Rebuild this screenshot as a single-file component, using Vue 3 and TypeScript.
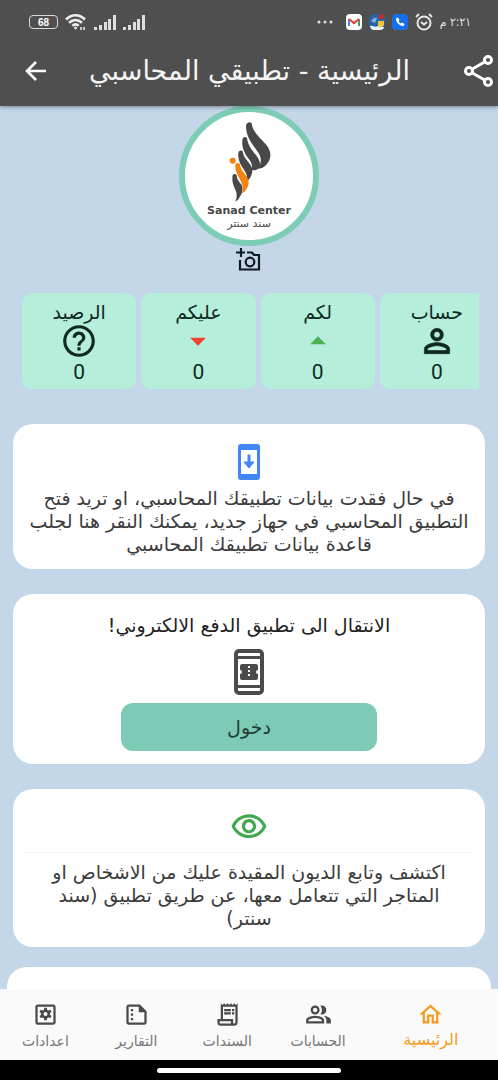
<script setup lang="ts">
interface Stat { label: string; value: number; icon: 'help' | 'down' | 'up' | 'person' }
interface Tab { label: string; icon: string[]; active?: boolean }

const stats: Stat[] = [
  { label: 'الرصيد', value: 0, icon: 'help' },
  { label: 'عليكم', value: 0, icon: 'down' },
  { label: 'لكم', value: 0, icon: 'up' },
  { label: 'حساب', value: 0, icon: 'person' },
]

const restoreLines: string[] = [
  'في حال فقدت بيانات تطبيقك المحاسبي، او تريد فتح',
  'التطبيق المحاسبي في جهاز جديد، يمكنك النقر هنا لجلب',
  'قاعدة بيانات تطبيقك المحاسبي',
]

const debtLines: string[] = [
  'اكتشف وتابع الديون المقيدة عليك من الاشخاص او',
  'المتاجر التي تتعامل معها، عن طريق تطبيق (سند',
  'سنتر)',
]

const tabs: Tab[] = [
  {
    label: 'الرئيسية',
    active: true,
    icon: ['M12 5.69l5 4.5V18h-2v-6H9v6H7v-7.81l5-4.5M12 3L2 12h3v8h6v-6h2v6h6v-8h3L12 3z'],
  },
  {
    label: 'الحسابات',
    icon: [
      'M16.67 13.13C18.04 14.06 19 15.32 19 17v3h4v-3c0-2.18-3.57-3.47-6.33-3.87z',
      'M15 12c2.21 0 4-1.79 4-4s-1.79-4-4-4c-.47 0-.91.1-1.33.24C14.5 5.27 15 6.58 15 8s-.5 2.73-1.33 3.76c.42.14.86.24 1.33.24z',
      'M9 12c2.21 0 4-1.79 4-4s-1.79-4-4-4-4 1.79-4 4 1.79 4 4 4zm0-6c1.1 0 2 .9 2 2s-.9 2-2 2-2-.9-2-2 .9-2 2-2z',
      'M9 13c-2.67 0-8 1.34-8 4v3h16v-3c0-2.66-5.33-4-8-4zm6 5H3v-.99C3.2 16.29 6.3 15 9 15s5.8 1.29 6 2v1z',
    ],
  },
  {
    label: 'السندات',
    icon: [
      'M19.5 3.5L18 2l-1.5 1.5L15 2l-1.5 1.5L12 2l-1.5 1.5L9 2 7.5 3.5 6 2v14H3v3c0 1.66 1.34 3 3 3h12c1.66 0 3-1.34 3-3V2l-1.5 1.5zM15 20H6c-.55 0-1-.45-1-1v-1h10v2zm4-1c0 .55-.45 1-1 1s-1-.45-1-1v-3H8V5h11v14z',
      'M9 7h6v2H9zM16 7h2v2h-2zM9 10h6v2H9zM16 10h2v2h-2z',
    ],
  },
  {
    label: 'التقارير',
    icon: [
      'M15 3H5c-1.1 0-2 .9-2 2v14c0 1.1.9 2 2 2h14c1.1 0 2-.9 2-2V9l-6-6zM5 19V5h9v5h5v9H5z',
      'M7 7h2v2H7zM7 11h2v2H7zM7 15h2v2H7z',
    ],
  },
  {
    label: 'اعدادات',
    icon: [
      'M19 3H5c-1.1 0-2 .9-2 2v14c0 1.1.9 2 2 2h14c1.1 0 2-.9 2-2V5c0-1.1-.9-2-2-2zm0 16H5V5h14v14z',
      'M10.9 6h2.2l.3 1.7 1.2.7 1.7-.6 1.1 1.9-1.4 1.1v1.4l1.4 1.1-1.1 1.9-1.7-.6-1.2.7-.3 1.7h-2.2l-.3-1.7-1.2-.7-1.7.6-1.1-1.9L8 12.2v-1.4L6.6 9.7l1.1-1.9 1.7.6 1.2-.7zM12 9.7a1.8 1.8 0 1 0 0 3.6 1.8 1.8 0 0 0 0-3.6z',
    ],
  },
]
</script>

<template>
  <div class="app" dir="rtl">
    <header class="top">
      <div class="status">
        <div class="status-group">
          <span class="clock">٢:٢١ م</span>
          <svg class="ic18" viewBox="0 0 18 18" fill="none" stroke="#e8e8e8" stroke-width="2">
            <circle cx="9" cy="10" r="6.5" /><path d="M6 9l3 2.5L12 9M1 4l3-3M17 4l-3-3" />
          </svg>
          <svg class="ic16" viewBox="0 0 16 16">
            <rect width="16" height="16" rx="4" fill="#1a6fe8" />
            <path d="M4 4.500l2-1 1.500 2.500-1 1.200c.5 1 1.300 1.800 2.300 2.300l1.200-1L12.500 10l-1 2C8 12.500 3.500 8 4 4.500z" fill="#fff" />
          </svg>
          <svg class="ic16" viewBox="0 0 16 16">
            <rect width="16" height="16" rx="5" fill="#2b62a3" />
            <path d="M1 12c3-1 5 2 8 0l6 1c0 2-2 3-4 3H5c-2 0-4-2-4-4z" fill="#e9f1f5" />
            <path d="M2 7c2-3 4-4 6-3L6 9z" fill="#7db6df" />
            <path d="M9 7h6v4l-3 3-3-2z" fill="#f5c83c" /><circle cx="12" cy="2.500" r="2.500" fill="#d3262b" />
          </svg>
          <svg class="ic16" viewBox="0 0 16 16">
            <rect width="16" height="16" rx="4" fill="#fff" />
            <path d="M3 12V5" stroke="#4285f4" stroke-width="2" /><path d="M13 12V5" stroke="#34a853" stroke-width="2" />
            <path d="M3 5l5 4 5-4" fill="none" stroke="#ea4335" stroke-width="2.200" />
          </svg>
          <svg class="more" viewBox="0 0 18 4" fill="#e0e0e0">
            <circle cx="3" cy="2" r="1.500" /><circle cx="9" cy="2" r="1.500" /><circle cx="15" cy="2" r="1.500" />
          </svg>
        </div>
        <div class="status-group">
          <svg v-for="n in 2" :key="n" class="signal" viewBox="0 0 22 15" fill="#dedede">
            <path d="M0 12h3v3H0zM5 10h3v5H5zM10 7h3v8h-3zM14 4h3v11h-3zM19 0h3v15h-3z" />
          </svg>
          <svg class="wifi" viewBox="0 0 22 16" fill="none" stroke="#ededed" stroke-width="2.600">
            <path d="M1 5.500c6-5.500 13-5.500 19 0M4 8.700c4-3.600 9-3.600 13 0M7.300 11.700c2-1.700 4.400-1.700 6.400 0" />
            <circle cx="10.500" cy="14" r="1" fill="#ededed" stroke-width="1" /><path d="M16 13v3M19 13v3" stroke-width="1.500" />
          </svg>
          <div class="battery"><span>68</span></div>
        </div>
      </div>
      <div class="bar">
        <button class="icon-btn" aria-label="مشاركة">
          <svg class="share" viewBox="0 0 30 34" fill="none" stroke="#fff" stroke-width="3">
            <circle cx="24" cy="6" r="3.500" /><circle cx="5" cy="17" r="3.500" /><circle cx="24" cy="28" r="3.500" />
            <path d="M8 15.300l13-7.600M8 18.700l13 7.600" />
          </svg>
        </button>
        <h1>الرئيسية - تطبيقي المحاسبي</h1>
        <button class="icon-btn" aria-label="رجوع">
          <svg class="back" viewBox="0 0 22 20" fill="none" stroke="#fff" stroke-width="2.600">
            <path d="M21 10H2M11 1l-9 9 9 9" />
          </svg>
        </button>
      </div>
    </header>

    <main>
      <div class="avatar">
        <svg class="mark" viewBox="171 62 132 249" fill="#484848">
          <path d="M228 77c2-11 10-14 17-8 3 28 27 43 45 66 16 22 14 42-1 58-9 10-17 12-27 12 12-14 14-30 4-46-13-22-38-44-38-82z" />
          <path d="M217 119c1-9 8-11 14-6 2 22 16 37 29 54 12 17 13 28 4 39-7 5-14 5-21 2 6-10 2-20-6-31-13-18-22-34-20-58z" />
          <path d="M205 158c1-8 8-10 13-5 2 17 14 28 23 40 9 14 7 28-2 41-2 4-5 7-8 8 1-12-1-22-8-32-11-16-20-32-18-52z" />
          <path d="M188 224c4-4 8-4 12 0 0 13 8 20 15 30 5 12 2 26-6 36-3 6-7 11-13 14 5-12 6-24 0-36-6-13-11-26-8-44z" />
          <path d="M196 193c4-6 9-7 14-2 1 16 12 25 21 39 8 14 6 26-3 38-3 5-7 9-12 11 3-12 3-23-3-36-8-15-19-31-17-50z" fill="#f58210" />
          <circle cx="188" cy="181" r="9" fill="#f58210" />
        </svg>
        <strong dir="ltr">Sanad Center</strong>
        <span>سند سنتر</span>
      </div>
      <button class="icon-btn camera" aria-label="تغيير الصورة">
        <svg viewBox="0 0 26 24" fill="none" stroke="#101820" stroke-width="2.200">
          <path d="M5 0v9M0 4.500h9M11 4.500h5l2 2.500h5v14.500H4V12" /><circle cx="14" cy="14" r="4.300" />
        </svg>
      </button>

      <section class="stats" dir="ltr">
        <article v-for="s in stats" :key="s.label" class="stat">
          <h2>{{ s.label }}</h2>
          <svg viewBox="0 0 24 24">
            <path v-if="s.icon === 'help'" fill="#10291f" d="M11 18h2v-2h-2v2zm1-16C6.480 2 2 6.480 2 12s4.480 10 10 10 10-4.480 10-10S17.520 2 12 2zm0 18c-4.410 0-8-3.590-8-8s3.590-8 8-8 8 3.590 8 8-3.590 8-8 8zm0-14c-2.210 0-4 1.790-4 4h2c0-1.100.9-2 2-2s2 .9 2 2c0 2-3 1.750-3 5h2c0-2.250 3-2.500 3-5 0-2.210-1.790-4-4-4z" />
            <path v-else-if="s.icon === 'down'" fill="#f04430" d="M7 10l5 5 5-5z" />
            <path v-else-if="s.icon === 'up'" fill="#4caf50" d="M7 14l5-5 5 5z" />
            <path v-else fill="#10291f" stroke="#10291f" stroke-width=".4" d="M12 6c1.100 0 2 .9 2 2s-.9 2-2 2-2-.9-2-2 .9-2 2-2m0 9c2.700 0 5.800 1.290 6 2v1H6v-.990c.2-.720 3.300-2.010 6-2.010m0-11C9.790 4 8 5.790 8 8s1.790 4 4 4 4-1.790 4-4-1.790-4-4-4zm0 9c-2.670 0-8 1.340-8 4v3h16v-3c0-2.660-5.330-4-8-4z" />
          </svg>
          <b>{{ s.value }}</b>
        </article>
      </section>

      <section class="cards">
        <article class="card">
          <svg class="restore" viewBox="0 0 24 36">
            <rect x="1" width="22" height="36" rx="3" fill="#4285f4" /><path d="M4 6h16v24H4z" fill="#fff" />
            <path d="M11 11h2v7h4l-5 6-5-6h4z" fill="#4285f4" stroke="#4285f4" />
          </svg>
          <p><span v-for="l in restoreLines" :key="l">{{ l }}</span></p>
        </article>

        <article class="card pay">
          <h3>الانتقال الى تطبيق الدفع الالكتروني!</h3>
          <svg class="ticket" viewBox="0 0 30 46">
            <rect x="2" y="2" width="26" height="42" rx="3" fill="none" stroke="#4d4a4c" stroke-width="4" />
            <path d="M2 8.500h26M2 37.500h26" stroke="#4d4a4c" stroke-width="3" />
            <path d="M6 17c0-1 1-2 2-2h14c1 0 2 1 2 2v4a2 2 0 0 0 0 4v4c0 1-1 2-2 2H8c-1 0-2-1-2-2v-4a2 2 0 0 0 0-4z" fill="#4d4a4c" />
            <path d="M15 17v12" stroke="#fff" stroke-width="2" stroke-dasharray="2 2" />
          </svg>
          <button class="enter">دخول</button>
        </article>

        <article class="card debts">
          <svg class="eye" viewBox="0 0 24 24" fill="#43a951">
            <path d="M12 6c3.790 0 7.170 2.130 8.820 5.500C19.170 14.870 15.790 17 12 17s-7.170-2.130-8.820-5.500C4.830 8.130 8.210 6 12 6m0-2C7 4 2.730 7.110 1 11.500 2.730 15.890 7 19 12 19s9.270-3.110 11-7.500C21.270 7.110 17 4 12 4zm0 5c1.380 0 2.500 1.120 2.500 2.500S13.380 14 12 14s-2.500-1.120-2.500-2.500S10.620 9 12 9m0-2c-2.480 0-4.500 2.020-4.500 4.500S9.520 16 12 16s4.500-2.020 4.500-4.500S14.480 7 12 7z" />
          </svg>
          <hr />
          <p><span v-for="l in debtLines" :key="l">{{ l }}</span></p>
        </article>
      </section>
      <div class="card next"></div>
    </main>

    <nav class="tabs">
      <a v-for="t in tabs" :key="t.label" href="#" :class="{ active: t.active }">
        <svg viewBox="0 0 24 24" fill="currentColor" fill-rule="evenodd"><path v-for="d in t.icon" :key="d" :d="d" /></svg>
        <span>{{ t.label }}</span>
      </a>
    </nav>
    <div class="gesture"><i></i></div>
  </div>
</template>

<style>
body { margin: 0; background: #c3d7e9; }
</style>

<style scoped>
* { box-sizing: border-box; }
h1, h2, h3, p { margin: 0; font-weight: 400; }
svg { display: block; flex: none; }
.app {
  height: 100vh;
  display: flex;
  flex-direction: column;
  overflow: hidden;
  background: #c3d7e9;
  color: #222;
  font-family: "DejaVu Sans", sans-serif;
}
.icon-btn { display: flex; padding: 0; border: 0; background: none; }
.top { flex: none; background: #4f4f4f; color: #fff; box-shadow: 0 1px 4px rgba(0, 0, 0, 0.4); z-index: 1; }
.status { display: flex; justify-content: space-between; align-items: center; height: 44px; padding: 0 27px 0 29px; }
.status-group { display: flex; align-items: center; gap: 7px; }
.clock { font-family: "DejaVu Sans Condensed", sans-serif; font-size: 12px; color: #e4e4e4; white-space: nowrap; }
.ic18 { width: 18px; height: 18px; }
.ic16 { width: 16px; height: 16px; }
.more { width: 18px; height: 4px; margin-right: 5px; }
.signal { width: 22px; height: 15px; }
.wifi { width: 22px; height: 16px; }
.battery {
  width: 29px; height: 14px; border: 1px solid #d8d8d8; border-radius: 4px;
  display: flex; align-items: center; justify-content: center;
  font: bold 10px "Liberation Sans", sans-serif; color: #fff;
}
.bar { display: flex; align-items: center; justify-content: space-between; height: 62px; padding: 0 4px 8px 25px; }
.bar h1 { flex: 1; text-align: right; padding-right: 54px; font-size: 27px; line-height: 40px; color: #f4f4f4; white-space: nowrap; }
.share { width: 30px; height: 34px; }
.back { width: 22px; height: 20px; }

main { flex: 1; min-height: 0; overflow: hidden; display: flex; flex-direction: column; align-items: center; }
.avatar {
  flex: none; width: 140px; height: 140px; border: 6px solid #7dccb7; border-radius: 50%; background: #fff;
  display: flex; flex-direction: column; align-items: center; padding-top: 9px; color: #484848;
}
.mark { width: 44px; height: 83px; }
.avatar strong { font-size: 11px; line-height: 14px; white-space: nowrap; }
.avatar span { font-size: 11px; line-height: 12px; }
.camera { flex: none; margin-top: 2px; }
.camera svg { width: 26px; height: 24px; }
.stats { flex: none; align-self: stretch; display: flex; gap: 5px; margin: 21px 19px 0 22px; overflow: hidden; }
.stat {
  flex: 0 0 25%; height: 96px; padding-top: 7px; border-radius: 10px; background: #b5efdb; color: #10291f;
  display: flex; flex-direction: column; align-items: center;
}
.stat h2 { font-size: 19px; line-height: 24px; }
.stat svg { width: 38px; height: 38px; margin: -2px 0 -1px; }
.stat b { font: 400 21px/26px Roboto, sans-serif; }
.cards { flex: none; align-self: stretch; display: flex; flex-direction: column; gap: 25px; padding: 35px 13px 0; }
.card { background: #fff; border-radius: 20px; display: flex; flex-direction: column; align-items: center; padding: 20px 12px 13px; }
.card p { text-align: center; font-size: 19px; line-height: 23px; color: #3c3c3c; }
.card p span { display: block; white-space: nowrap; }
.restore { width: 24px; height: 36px; margin-bottom: 7px; }
.pay { padding-top: 17px; }
.pay h3 { font-size: 19px; line-height: 28px; }
.ticket { width: 30px; height: 46px; margin: 10px 0 8px; }
.enter {
  width: 57%; height: 48px; padding: 0; border: 0; border-radius: 12px; background: #7dcab6;
  color: #243d36; font-family: inherit; font-size: 19px;
}
.debts { padding-top: 19px; padding-bottom: 17px; }
.eye { width: 38px; height: 38px; }
.debts hr { align-self: stretch; margin: 6px 0 8px; border: 0; border-top: 1px solid #f2f2f2; }
.next { flex: none; align-self: stretch; height: 80px; margin: 20px 7px 0; }

.tabs { flex: none; display: flex; height: 71px; background: #fafafa; }
.tabs a {
  flex: 1; display: flex; flex-direction: column; align-items: center; padding-top: 12px;
  color: #4a4a4a; text-decoration: none;
}
.tabs a.active { flex: 0 0 27%; color: #f79a1c; }
.tabs svg { width: 27px; height: 27px; }
.tabs span { font-size: 14px; line-height: 26px; color: #777; white-space: nowrap; }
.tabs .active span { font-size: 16px; line-height: 24px; color: #f79a1c; }
.gesture { flex: none; height: 20px; background: #000; display: flex; align-items: center; justify-content: center; }
.gesture i { width: 37%; height: 5px; border-radius: 3px; background: #fff; }
</style>
